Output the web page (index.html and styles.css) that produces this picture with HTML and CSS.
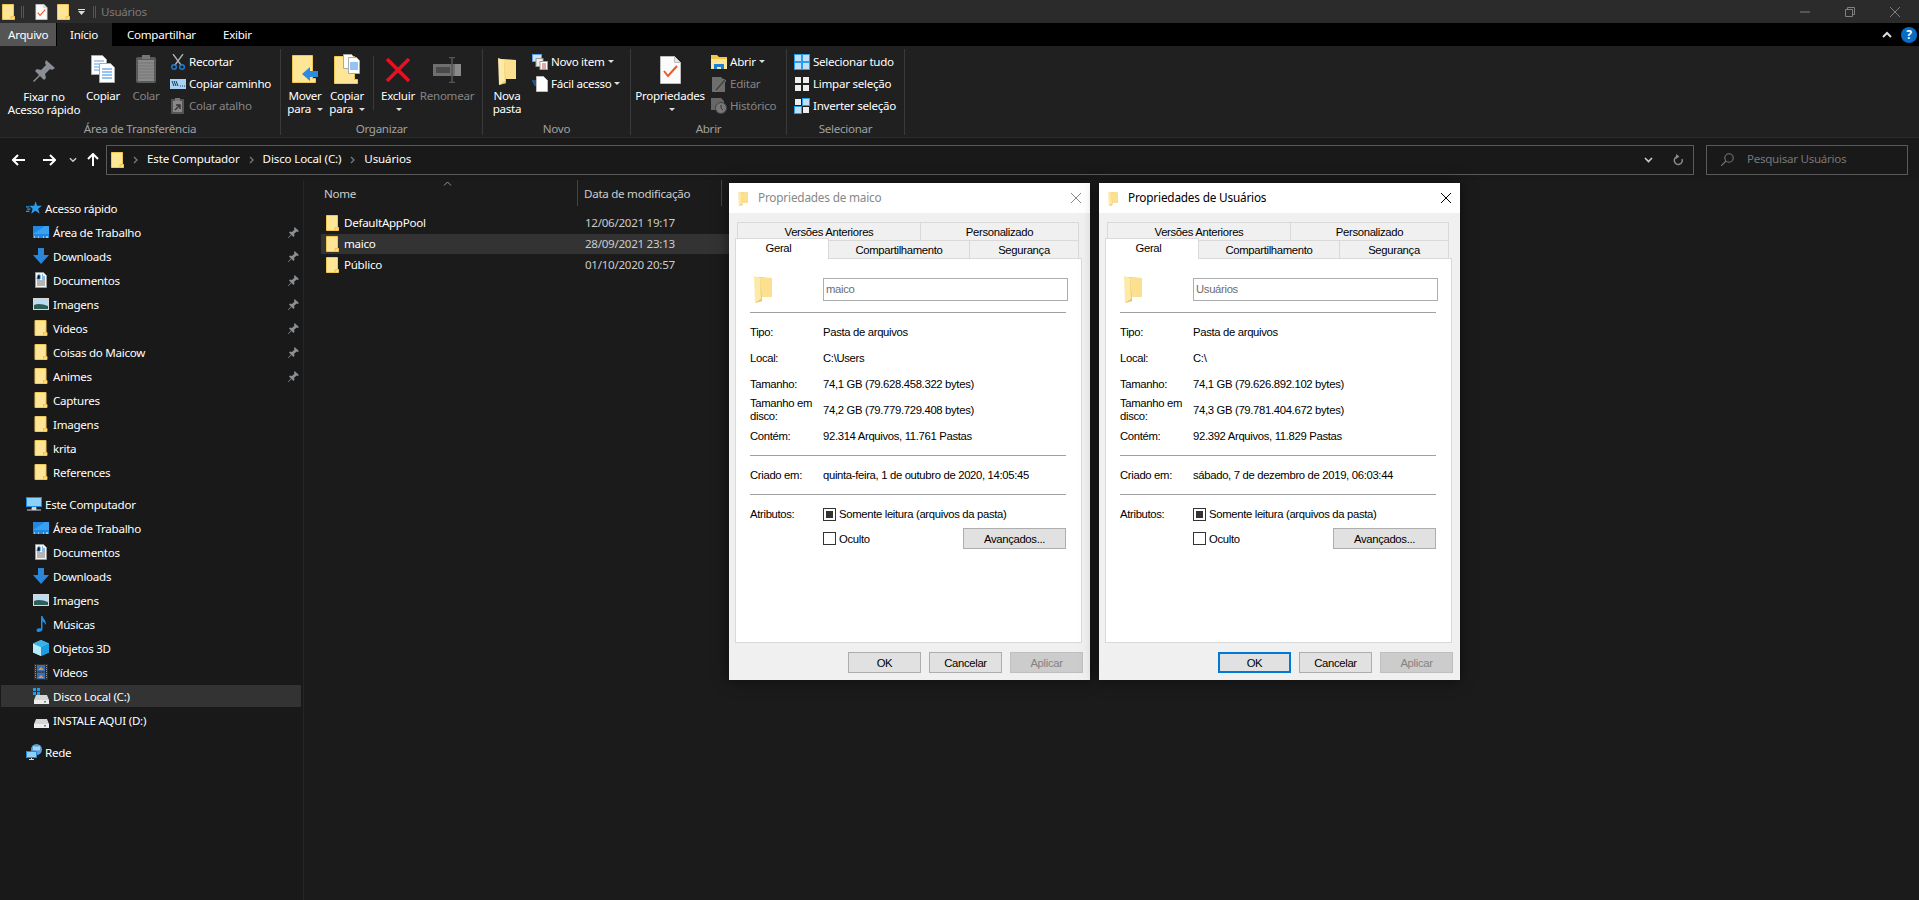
FILE: index.html
```html
<!DOCTYPE html>
<html lang="pt-BR">
<head>
    <meta charset="UTF-8">
    <title>Usuários</title>
    <link rel="stylesheet" href="styles.css">
</head>
<body>
    <!-- Icon sheet -->
    <svg class="sprites" xmlns="http://www.w3.org/2000/svg">
        <symbol id="i-folder" viewBox="0 0 13 16"><path d="M.5.5h11v12h1v3H.5z" fill="#ffe596" stroke="#f2c652"/><path d="M9 15.5v-3h3.5" fill="#f9d56e" stroke="#f2c652"/></symbol>
        <symbol id="i-book" viewBox="0 0 18 28"><path d="M1 2h5l12 1v19H6z" fill="#f3d27a"/><path d="M6 3h12v19H8z" fill="#fbe08f"/><path d="M0 1l6 2 2 23-7 2z" fill="#fde9a8"/><path d="M6 3l2 23-7 2 6-4z" fill="#eebf58"/></symbol>
        <symbol id="i-props" viewBox="0 0 21 28"><path d="M.5.5h14l6 6v21H.5z" fill="#fbfbfb" stroke="#bdbdbd"/><path d="M14.500.5v6h6" fill="#e4e4e4" stroke="#bdbdbd"/><path d="M4 15l4 5 9-10" fill="none" stroke="#ea5a24" stroke-width="2"/></symbol>
        <symbol id="i-pin" viewBox="0 0 22 22"><path d="M13 0l9 8-3 2-2-1-5 5 1 4-2 2-4-4-6 6-1-1 6-6-4-4 2-2 4 1 5-5-1-2z" fill="#8a8f96"/></symbol>
        <symbol id="i-copy" viewBox="0 0 24 28"><path d="M.5.5h11l4 4v15H.5z" fill="#fff" stroke="#aaa"/><path d="M3 6h10M3 9h10M3 12h10M3 15h10" stroke="#5aa0e8"/><path d="M8.500 8.500h11l4 4v15h-15z" fill="#fff" stroke="#aaa"/><path d="M11 14h10M11 17h10M11 20h10M11 23h10" stroke="#2f86e0"/></symbol>
        <symbol id="i-paste" viewBox="0 0 20 28"><rect y="2" width="20" height="26" rx="2" fill="#5a5a5a"/><rect x="2" y="5" width="16" height="21" fill="#8a8a8a"/><path d="M2 8h16M2 11h16M2 14h16M2 17h16M2 20h16M2 23h16" stroke="#777"/><rect x="6" width="8" height="4" fill="#777"/></symbol>
        <symbol id="i-scissors" viewBox="0 0 14 16"><path d="M2 0l8 11M12 0L4 11" stroke="#b5b5b5" stroke-width="1.300" fill="none"/><circle cx="3" cy="13" r="2.300" fill="none" stroke="#1f7fd6" stroke-width="1.400"/><circle cx="11" cy="13" r="2.300" fill="none" stroke="#1f7fd6" stroke-width="1.400"/></symbol>
        <symbol id="i-path" viewBox="0 0 16 10"><rect width="16" height="10" fill="#a9d3f5"/><path d="M2 2l2 5M4 2l2 5M6 2l2 5M10 7h1M12 7h1M14 7h1" stroke="#1b3a57"/></symbol>
        <symbol id="i-pastelink" viewBox="0 0 14 16"><rect y="1" width="13" height="15" rx="1" fill="#555"/><rect x="2" y="3" width="9" height="11" fill="#888"/><rect x="4" width="5" height="3" fill="#777"/><path d="M4 12l4-4M5 7h4v4" stroke="#333" stroke-width="1.400" fill="none"/></symbol>
        <symbol id="i-move" viewBox="0 0 26 28"><path d="M.5.500h20v23h3v4H.5z" fill="#ffe596" stroke="#f2c652"/><path d="M10 19l8-7v4h8v6h-8v4z" fill="#2a8be0"/></symbol>
        <symbol id="i-copyto" viewBox="0 0 26 30"><path d="M.5 2.500h20v23h3v4H.5z" fill="#ffe596" stroke="#f2c652"/><path d="M9.500.5h8l2 2v12h-10z" fill="#fff" stroke="#aaa"/><path d="M14.500 3.500h8l3 3v13h-11z" fill="#fff" stroke="#aaa"/><path d="M16 9h8M16 11h8M16 13h8M16 15h8" stroke="#2f86e0"/></symbol>
        <symbol id="i-delete" viewBox="0 0 24 24"><path d="M1 1l22 22M23 1L1 23" stroke="#e81123" stroke-width="3.600"/></symbol>
        <symbol id="i-rename" viewBox="0 0 28 26"><rect y="7" width="28" height="12" fill="#6f6f6f"/><rect x="3" y="10" width="14" height="6" fill="#4a4a4a"/><rect x="22" y="7" width="6" height="12" fill="#8a8a8a"/><path d="M16 .5h6M19 .5v25M16 25.500h6" stroke="#555" stroke-width="1.500" fill="none"/></symbol>
        <symbol id="i-newitem" viewBox="0 0 16 16"><rect x=".5" y=".5" width="9" height="7" fill="#cfe4f7" stroke="#5aa0e8"/><rect x="4" y="4.500" width="7" height="8" fill="#eee" stroke="#999"/><rect x="8" y="7.500" width="7.500" height="8" fill="#fff" stroke="#999"/><path d="M10 10h4M10 12h4M10 14h4" stroke="#c0504d"/></symbol>
        <symbol id="i-easy" viewBox="0 0 16 16"><path d="M4.500.5h7l4 4v11h-11z" fill="#fff" stroke="#bbb"/><path d="M0 5h4M1 7h3M2 9h2" stroke="#2f86e0"/></symbol>
        <symbol id="i-open" viewBox="0 0 16 14"><path d="M0 0h6l2 2h8v12H0z" fill="#f6c544"/><path d="M0 4h16v10H0z" fill="#ffe596"/><path d="M3 14V9h10v5h-3v-2H6v2z" fill="#1f7fd6"/></symbol>
        <symbol id="i-edit" viewBox="0 0 16 16"><path d="M1 1h9l4 4v11H1z" fill="#6d6d6d"/><path d="M4 13l9-10 2 2-9 10H4z" fill="#4a4a4a" stroke="#8a8a8a" stroke-width=".6"/></symbol>
        <symbol id="i-history" viewBox="0 0 16 16"><path d="M0 0h10l3 3v9H0z" fill="#666"/><circle cx="10" cy="10" r="5.500" fill="#777" stroke="#444"/><path d="M10 7v3l2 2" stroke="#333" fill="none"/></symbol>
        <symbol id="i-selall" viewBox="0 0 16 16"><rect width="16" height="16" fill="#2f9be8"/><path d="M1 1h6v6H1zM9 1h6v6H9zM1 9h6v6H1zM9 9h6v6H9z" fill="#bfe0f8"/></symbol>
        <symbol id="i-selnone" viewBox="0 0 16 16"><path d="M1 1h6v6H1zM9 1h6v6H9zM1 9h6v6H1zM9 9h6v6H9z" fill="#eee"/></symbol>
        <symbol id="i-selinv" viewBox="0 0 16 16"><path d="M8 0h8v8H8zM0 8h8v8H0z" fill="#2f9be8"/><path d="M9 1h6v6H9zM1 9h6v6H1z" fill="#bfe0f8"/><path d="M1 1h6v6H1zM9 9h6v6H9z" fill="#eee"/></symbol>
        <symbol id="i-star" viewBox="0 0 14 12"><path d="M8.500 0l1.200 4H14l-3.400 2.600L12 11 8.300 8.500 4.500 11l1.300-4.300-3-2.700h4.300z" fill="#2f9be8"/><path d="M0 5h3M1 7h3M0 9h3" stroke="#2f9be8"/></symbol>
        <symbol id="i-desktop" viewBox="0 0 16 12"><rect width="16" height="12" fill="#1e88e5"/><path d="M0 8L12 0h4v8z" fill="#3aa0f0"/><path d="M1 11h1M5 11h1M10 11h1M13 11h2" stroke="#fff"/></symbol>
        <symbol id="i-down" viewBox="0 0 16 16"><path d="M5 0h6v7h5l-8 9-8-9h5z" fill="#2a86da"/></symbol>
        <symbol id="i-doc" viewBox="0 0 12 16"><path d="M.5.5h8l3 3v12H.5z" fill="#f4f4f4" stroke="#999"/><path d="M2 7h3V3H3zM7 3h1M7 5h3M7 7h3" stroke="#1f7fd6"/><path d="M2 9h8M2 11h8M2 13h8" stroke="#777"/></symbol>
        <symbol id="i-picture" viewBox="0 0 16 12"><rect width="16" height="12" fill="#d9d9d9"/><rect x="1" y="1" width="14" height="10" fill="#bcdcf4"/><path d="M1 7c4-2 9-1 14 1v3H1z" fill="#2e5f57"/></symbol>
        <symbol id="i-pc" viewBox="0 0 16 15"><rect y=".5" width="16" height="10" fill="#1e88e5"/><rect x="1" y="1.500" width="14" height="8" fill="#8ed0f8"/><path d="M6 11h4v2H6zM1 13.500h14" stroke="#cfd8dc" fill="#cfd8dc"/></symbol>
        <symbol id="i-music" viewBox="0 0 12 16"><path d="M6 0h1.500c.4 3 4 4 3.500 9-1-2-2-3-3.500-3.500V13c0 2-2 3-4 3S1 14 2 13s3-1 4-.5z" fill="#1f8fe6"/></symbol>
        <symbol id="i-cube" viewBox="0 0 16 16"><path d="M8 0l8 3.500v9L8 16 0 12.500v-9z" fill="#4ab8ec"/><path d="M0 3.500L8 7v9l-8-3.500z" fill="#b8ecf8"/><path d="M16 3.500L8 7v9l8-3.500z" fill="#1b9ee0"/><path d="M8 0l8 3.500L8 7 0 3.500z" fill="#3db0e8"/></symbol>
        <symbol id="i-film" viewBox="0 0 14 16"><rect width="14" height="16" fill="#2e2e2e"/><rect x="3" y="1" width="8" height="6.500" fill="#3b6fb5"/><rect x="3" y="8.500" width="8" height="6.500" fill="#3b6fb5"/><path d="M4 6l3-3 3 3zM4 14l3-3 3 3z" fill="#e8903a"/><path d="M1.500 1v14M12.500 1v14" stroke="#999" stroke-dasharray="1 1"/></symbol>
        <symbol id="i-drive" viewBox="0 0 15 9"><path d="M2 0h11l2 5v4H0V5z" fill="#d6d6d6"/><rect y="5" width="15" height="4" fill="#eee"/><rect x="10" y="6" width="2" height="1.500" fill="#3fa34d"/></symbol>
        <symbol id="i-win" viewBox="0 0 7 7"><path d="M0 0h3v3H0zM4 0h3v3H4zM0 4h3v3H0zM4 4h3v3H4z" fill="#1f9be8"/></symbol>
        <symbol id="i-net" viewBox="0 0 16 16"><circle cx="10.500" cy="5.500" r="5.500" fill="#5b9fd8"/><path d="M7 2c2 1 5 1 7 0v4c-2 1-5 0-7 0z" fill="#a8d4ef"/><rect y="7" width="11" height="7" fill="#1e88e5"/><rect x="1" y="8" width="9" height="5" fill="#8ed0f8"/><path d="M3 15.500h5M5.500 14v1" stroke="#cfd8dc"/></symbol>
        <symbol id="i-search" viewBox="0 0 13 13"><circle cx="8" cy="5" r="4.200" fill="none" stroke="#777" stroke-width="1.100"/><path d="M5 8l-5 5" stroke="#777" stroke-width="1.100"/></symbol>
        <symbol id="i-back" viewBox="0 0 13 12"><path d="M6 1L1 6l5 5M1 6h12" fill="none" stroke="#fff" stroke-width="2"/></symbol>
        <symbol id="i-up" viewBox="0 0 12 13"><path d="M1 6l5-5 5 5M6 1v12" fill="none" stroke="#fff" stroke-width="2"/></symbol>
        <symbol id="i-chev-down" viewBox="0 0 9 6"><path d="M1 1l3.500 3.500L8 1" fill="none" stroke="#ccc" stroke-width="1.600"/></symbol>
        <symbol id="i-chev-right" viewBox="0 0 5 8"><path d="M1 1l3 3-3 3" fill="none" stroke="#777" stroke-width="1.400"/></symbol>
        <symbol id="i-refresh" viewBox="0 0 11 12"><path d="M5 2.500A4 4 0 1 0 9 5" fill="none" stroke="#8a8a8a" stroke-width="1.500"/><path d="M3 0l3.500 2.500L3 5z" fill="#8a8a8a"/></symbol>
    </svg>

    <div class="explorer">
        <!-- Title bar -->
        <header class="titlebar">
            <svg class="qa qa-first"><use href="#i-folder"/></svg>
            <span class="qa-sep"></span>
            <svg class="qa qa-props"><use href="#i-props"/></svg>
            <svg class="qa qa-folder"><use href="#i-folder"/></svg>
            <svg class="qa-more" viewBox="0 0 7 6"><path d="M0 .5h7" stroke="#ddd"/><path d="M0 2h7L3.500 6z" fill="#ddd"/></svg>
            <span class="qa-sep qa-sep-last"></span>
            <span class="title-text">Usuários</span>
            <div class="win-controls">
                <svg class="win-btn" viewBox="0 0 10 10"><path d="M0 5h10"/></svg>
                <svg class="win-btn" viewBox="0 0 10 10"><path d="M.5 2.500h7v7h-7zM2.500 2.500v-2h7v7h-2"/></svg>
                <svg class="win-btn" viewBox="0 0 10 10"><path d="M0 0l10 10M10 0L0 10"/></svg>
            </div>
        </header>

        <!-- Ribbon tabs -->
        <nav class="tabstrip">
            <span class="rtab rtab-file">Arquivo</span>
            <span class="rtab rtab-active">Início</span>
            <span class="rtab rtab-share">Compartilhar</span>
            <span class="rtab rtab-view">Exibir</span>
            <div class="tabstrip-right">
                <svg class="collapse" viewBox="0 0 10 7"><path d="M1 6l4-4 4 4" fill="none" stroke="#ddd" stroke-width="2"/></svg>
                <span class="help">?</span>
            </div>
        </nav>

        <!-- Ribbon -->
        <section class="ribbon">
            <div class="group group-clip">
                <div class="group-items">
                    <div class="big w-pin"><svg class="ic-pin"><use href="#i-pin"/></svg><span>Fixar no<br>Acesso rápido</span></div>
                    <div class="big w-copy"><svg class="ic-copy"><use href="#i-copy"/></svg><span>Copiar</span></div>
                    <div class="big w-paste dim"><svg class="ic-paste"><use href="#i-paste"/></svg><span>Colar</span></div>
                    <div class="stack">
                        <div class="small"><svg><use href="#i-scissors"/></svg>Recortar</div>
                        <div class="small"><svg><use href="#i-path"/></svg>Copiar caminho</div>
                        <div class="small dim"><svg><use href="#i-pastelink"/></svg>Colar atalho</div>
                    </div>
                </div>
                <div class="group-label">Área de Transferência</div>
            </div>
            <div class="group group-org">
                <div class="group-items">
                    <div class="big w-move"><svg class="ic-move"><use href="#i-move"/></svg><span>Mover<br>para <i class="caret"></i></span></div>
                    <div class="big w-copyto"><svg class="ic-move"><use href="#i-copyto"/></svg><span>Copiar<br>para <i class="caret"></i></span></div>
                    <span class="inner-sep"></span>
                    <div class="big w-del"><svg class="ic-del"><use href="#i-delete"/></svg><span>Excluir<br><i class="caret"></i></span></div>
                    <div class="big w-ren dim"><svg class="ic-ren"><use href="#i-rename"/></svg><span>Renomear</span></div>
                </div>
                <div class="group-label">Organizar</div>
            </div>
            <div class="group group-new">
                <div class="group-items">
                    <div class="big w-new"><svg class="ic-book"><use href="#i-book"/></svg><span>Nova<br>pasta</span></div>
                    <div class="stack stack-new">
                        <div class="small"><svg><use href="#i-newitem"/></svg>Novo item <i class="caret"></i></div>
                        <div class="small"><svg><use href="#i-easy"/></svg>Fácil acesso <i class="caret"></i></div>
                    </div>
                </div>
                <div class="group-label">Novo</div>
            </div>
            <div class="group group-open">
                <div class="group-items">
                    <div class="big w-props"><svg class="ic-props"><use href="#i-props"/></svg><span>Propriedades<br><i class="caret"></i></span></div>
                    <div class="stack stack-open">
                        <div class="small"><svg><use href="#i-open"/></svg>Abrir <i class="caret"></i></div>
                        <div class="small dim"><svg><use href="#i-edit"/></svg>Editar</div>
                        <div class="small dim"><svg><use href="#i-history"/></svg>Histórico</div>
                    </div>
                </div>
                <div class="group-label">Abrir</div>
            </div>
            <div class="group group-sel">
                <div class="group-items">
                    <div class="stack stack-sel">
                        <div class="small"><svg><use href="#i-selall"/></svg>Selecionar tudo</div>
                        <div class="small"><svg><use href="#i-selnone"/></svg>Limpar seleção</div>
                        <div class="small"><svg><use href="#i-selinv"/></svg>Inverter seleção</div>
                    </div>
                </div>
                <div class="group-label">Selecionar</div>
            </div>
        </section>

        <!-- Address bar -->
        <section class="addressbar">
            <svg class="nav-back"><use href="#i-back"/></svg>
            <svg class="nav-fwd"><use href="#i-back"/></svg>
            <svg class="nav-hist"><use href="#i-chev-down"/></svg>
            <svg class="nav-up"><use href="#i-up"/></svg>
            <div class="address">
                <svg class="addr-folder"><use href="#i-folder"/></svg>
                <svg class="crumb-sep"><use href="#i-chev-right"/></svg>
                <span class="crumb">Este Computador</span>
                <svg class="crumb-sep"><use href="#i-chev-right"/></svg>
                <span class="crumb">Disco Local (C:)</span>
                <svg class="crumb-sep"><use href="#i-chev-right"/></svg>
                <span class="crumb">Usuários</span>
                <div class="addr-tools">
                    <svg class="addr-chev"><use href="#i-chev-down"/></svg>
                    <svg class="addr-refresh"><use href="#i-refresh"/></svg>
                </div>
            </div>
            <div class="searchbox">
                <svg class="search-ic"><use href="#i-search"/></svg>
                <span class="search-text">Pesquisar Usuários</span>
            </div>
        </section>

        <!-- Main -->
        <main class="main">
            <aside class="sidebar">
                <div class="tree-row root"><svg><use href="#i-star"/></svg>Acesso rápido</div>
                <div class="tree-row"><svg><use href="#i-desktop"/></svg>Área de Trabalho<svg class="pin"><use href="#i-pin"/></svg></div>
                <div class="tree-row"><svg><use href="#i-down"/></svg>Downloads<svg class="pin"><use href="#i-pin"/></svg></div>
                <div class="tree-row"><svg><use href="#i-doc"/></svg>Documentos<svg class="pin"><use href="#i-pin"/></svg></div>
                <div class="tree-row"><svg><use href="#i-picture"/></svg>Imagens<svg class="pin"><use href="#i-pin"/></svg></div>
                <div class="tree-row"><svg><use href="#i-folder"/></svg>Videos<svg class="pin"><use href="#i-pin"/></svg></div>
                <div class="tree-row"><svg><use href="#i-folder"/></svg>Coisas do Maicow<svg class="pin"><use href="#i-pin"/></svg></div>
                <div class="tree-row"><svg><use href="#i-folder"/></svg>Animes<svg class="pin"><use href="#i-pin"/></svg></div>
                <div class="tree-row"><svg><use href="#i-folder"/></svg>Captures</div>
                <div class="tree-row"><svg><use href="#i-folder"/></svg>Imagens</div>
                <div class="tree-row"><svg><use href="#i-folder"/></svg>krita</div>
                <div class="tree-row"><svg><use href="#i-folder"/></svg>References</div>

                <div class="tree-row root tree-gap"><svg><use href="#i-pc"/></svg>Este Computador</div>
                <div class="tree-row"><svg><use href="#i-desktop"/></svg>Área de Trabalho</div>
                <div class="tree-row"><svg><use href="#i-doc"/></svg>Documentos</div>
                <div class="tree-row"><svg><use href="#i-down"/></svg>Downloads</div>
                <div class="tree-row"><svg><use href="#i-picture"/></svg>Imagens</div>
                <div class="tree-row"><svg><use href="#i-music"/></svg>Músicas</div>
                <div class="tree-row"><svg><use href="#i-cube"/></svg>Objetos 3D</div>
                <div class="tree-row"><svg><use href="#i-film"/></svg>Vídeos</div>
                <div class="tree-row selected"><span class="drive-c"><svg class="drive-win"><use href="#i-win"/></svg><svg class="drive-disk"><use href="#i-drive"/></svg></span>Disco Local (C:)</div>
                <div class="tree-row"><span class="drive-c"><svg class="drive-disk"><use href="#i-drive"/></svg></span>INSTALE AQUI (D:)</div>

                <div class="tree-row root tree-gap"><svg><use href="#i-net"/></svg>Rede</div>
            </aside>

            <section class="files">
                <div class="file-head">
                    <div class="col-name">Nome<svg class="sort" viewBox="0 0 9 5"><path d="M1 4.500L4.500 1 8 4.500" fill="none" stroke="#999"/></svg></div>
                    <div class="col-date">Data de modificação</div>
                </div>
                <div class="file-row"><div class="col-name"><svg><use href="#i-folder"/></svg><span>DefaultAppPool</span></div><div class="col-date">12/06/2021 19:17</div></div>
                <div class="file-row active"><div class="col-name"><svg><use href="#i-folder"/></svg><span>maico</span></div><div class="col-date">28/09/2021 23:13</div></div>
                <div class="file-row"><div class="col-name"><svg><use href="#i-folder"/></svg><span>Público</span></div><div class="col-date">01/10/2020 20:57</div></div>
            </section>
        </main>
    </div>

    <!-- Properties of maico -->
    <div class="dialog dialog-back">
        <div class="dlg-title">
            <svg class="dlg-ic"><use href="#i-book"/></svg>
            <span class="dlg-text">Propriedades de maico</span>
            <svg class="dlg-close" viewBox="0 0 10 10"><path d="M0 0l10 10M10 0L0 10"/></svg>
        </div>
        <div class="dlg-body">
            <div class="tabs-top"><span class="t-prev">Versões Anteriores</span><span class="t-custom">Personalizado</span></div>
            <div class="tabs-low"><span class="t-general">Geral</span><span class="t-share">Compartilhamento</span><span class="t-sec">Segurança</span></div>
            <div class="panel">
                <div class="name-row"><svg class="panel-ic"><use href="#i-book"/></svg><div class="name-input">maico</div></div>
                <hr>
                <div class="prop"><span>Tipo:</span><span>Pasta de arquivos</span></div>
                <div class="prop"><span>Local:</span><span>C:\Users</span></div>
                <div class="prop"><span>Tamanho:</span><span>74,1 GB (79.628.458.322 bytes)</span></div>
                <div class="prop"><span class="two-line">Tamanho em disco:</span><span>74,2 GB (79.779.729.408 bytes)</span></div>
                <div class="prop"><span>Contém:</span><span>92.314 Arquivos, 11.761 Pastas</span></div>
                <hr>
                <div class="prop"><span>Criado em:</span><span>quinta-feira, 1 de outubro de 2020, 14:05:45</span></div>
                <hr>
                <div class="attrs">
                    <span class="attrs-label">Atributos:</span>
                    <div class="attrs-main">
                        <div class="check-row"><i class="check mixed"></i>Somente leitura (arquivos da pasta)</div>
                        <div class="check-row"><i class="check"></i>Oculto<span class="btn btn-adv">Avançados...</span></div>
                    </div>
                </div>
            </div>
            <div class="dlg-buttons">
                <span class="btn">OK</span><span class="btn">Cancelar</span><span class="btn btn-off">Aplicar</span>
            </div>
        </div>
    </div>

    <!-- Properties of Usuários -->
    <div class="dialog dialog-front">
        <div class="dlg-title">
            <svg class="dlg-ic"><use href="#i-book"/></svg>
            <span class="dlg-text">Propriedades de Usuários</span>
            <svg class="dlg-close" viewBox="0 0 10 10"><path d="M0 0l10 10M10 0L0 10"/></svg>
        </div>
        <div class="dlg-body">
            <div class="tabs-top"><span class="t-prev">Versões Anteriores</span><span class="t-custom">Personalizado</span></div>
            <div class="tabs-low"><span class="t-general">Geral</span><span class="t-share">Compartilhamento</span><span class="t-sec">Segurança</span></div>
            <div class="panel">
                <div class="name-row"><svg class="panel-ic"><use href="#i-book"/></svg><div class="name-input">Usuários</div></div>
                <hr>
                <div class="prop"><span>Tipo:</span><span>Pasta de arquivos</span></div>
                <div class="prop"><span>Local:</span><span>C:\</span></div>
                <div class="prop"><span>Tamanho:</span><span>74,1 GB (79.626.892.102 bytes)</span></div>
                <div class="prop"><span class="two-line">Tamanho em disco:</span><span>74,3 GB (79.781.404.672 bytes)</span></div>
                <div class="prop"><span>Contém:</span><span>92.392 Arquivos, 11.829 Pastas</span></div>
                <hr>
                <div class="prop"><span>Criado em:</span><span>sábado, 7 de dezembro de 2019, 06:03:44</span></div>
                <hr>
                <div class="attrs">
                    <span class="attrs-label">Atributos:</span>
                    <div class="attrs-main">
                        <div class="check-row"><i class="check mixed"></i>Somente leitura (arquivos da pasta)</div>
                        <div class="check-row"><i class="check"></i>Oculto<span class="btn btn-adv">Avançados...</span></div>
                    </div>
                </div>
            </div>
            <div class="dlg-buttons">
                <span class="btn btn-focus">OK</span><span class="btn">Cancelar</span><span class="btn btn-off">Aplicar</span>
            </div>
        </div>
    </div>
</body>
</html>
```

FILE: styles.css
```css
* {
    box-sizing: border-box;
}

html, body {
    margin: 0;
    height: 100%;
    overflow: hidden;
}

body {
    position: relative;
    background: #191919;
    color: #fff;
    font-family: "Noto Sans", sans-serif;
    font-size: 11.6px;
    letter-spacing: -0.28px;
}

.sprites {
    display: none;
}

.explorer {
    display: flex;
    flex-direction: column;
    height: 900px;
}

.dim {
    color: #858585;
}

/* Title bar */
.titlebar {
    display: flex;
    align-items: center;
    height: 23px;
    background: #2b2b2b;
    color: #7b7b7b;
}

.qa {
    width: 13px;
    height: 16px;
    flex: none;
}

.qa-first {
    margin-left: 2px;
}

.qa-sep {
    width: 3px;
    height: 12px;
    margin: 0 11px 0 6px;
    border-left: 1px solid #555;
    border-right: 1px solid #555;
}

.qa-folder {
    margin-left: 9px;
}

.qa-more {
    width: 7px;
    height: 6px;
    margin-left: 8px;
}

.qa-sep-last {
    margin: 0 5px 0 8px;
}

.win-controls {
    display: flex;
    gap: 35px;
    margin-left: auto;
    margin-right: 19px;
}

.win-btn {
    width: 10px;
    height: 10px;
    fill: none;
    stroke: #808080;
    stroke-width: 1;
}

/* Ribbon tabs */
.tabstrip {
    display: flex;
    align-items: stretch;
    height: 23px;
    background: #000;
}

.rtab {
    display: flex;
    align-items: center;
}

.rtab-file {
    width: 56px;
    margin-right: 1px;
    padding-left: 8px;
    background: #555;
}

.rtab-active {
    width: 55px;
    padding-left: 13px;
    background: #202020;
}

.rtab-share {
    margin-left: 15px;
    width: 96px;
}

.tabstrip-right {
    display: flex;
    align-items: center;
    gap: 9px;
    margin-left: auto;
    margin-right: 2px;
}

.collapse {
    width: 10px;
    height: 7px;
}

.help {
    width: 16px;
    height: 16px;
    border-radius: 50%;
    background: #0a6cc4;
    font-weight: 700;
    font-size: 12px;
    line-height: 16px;
    text-align: center;
    letter-spacing: 0;
}

/* Ribbon */
.ribbon {
    display: flex;
    height: 92px;
    background: #202020;
    border-bottom: 1px solid #2b2b2b;
}

.group {
    display: flex;
    flex-direction: column;
    flex: none;
    border-right: 1px solid #3a3a3a;
    margin-top: 3px;
    margin-bottom: 2px;
}

.group-clip { width: 281px; }
.group-org { width: 202px; }
.group-new { width: 148px; }
.group-open { width: 156px; }
.group-sel { width: 118px; }

.group-items {
    display: flex;
    flex: 1;
    padding-top: 2px;
}

.group-label {
    height: 14px;
    line-height: 16px;
    text-align: center;
    color: #a0a0a0;
}

.big {
    display: flex;
    flex-direction: column;
    align-items: center;
    flex: none;
    line-height: 13px;
    text-align: center;
}

.big svg {
    flex: none;
}

.big > span {
    margin-top: -1px;
    white-space: nowrap;
}

.w-pin { width: 80px; margin-left: 4px; }
.w-copy { width: 38px; }
.w-paste { width: 48px; }
.w-move { width: 44px; margin-left: 2px; }
.w-copyto { width: 40px; }
.w-del { width: 44px; }
.w-ren { width: 54px; }
.w-new { width: 40px; margin-left: 4px; }
.w-props { width: 70px; margin-left: 4px; }

.ic-pin { width: 22px; height: 22px; margin-top: 9px; margin-bottom: 9px; }
.ic-copy { width: 24px; height: 28px; margin-top: 4px; margin-bottom: 7px; }
.ic-paste { width: 20px; height: 28px; margin-top: 4px; margin-bottom: 7px; }
.ic-move { width: 26px; height: 30px; margin-top: 3px; margin-bottom: 6px; }
.ic-del { width: 24px; height: 24px; margin-top: 7px; margin-bottom: 8px; }
.ic-ren { width: 28px; height: 26px; margin-top: 6px; margin-bottom: 7px; }
.ic-book { width: 18px; height: 28px; margin-top: 6px; margin-bottom: 5px; }
.ic-props { width: 21px; height: 28px; margin-top: 5px; margin-bottom: 6px; }

.inner-sep {
    flex: none;
    width: 1px;
    height: 54px;
    margin: 5px 2px 0 6px;
    background: #3a3a3a;
}

.stack {
    display: flex;
    flex-direction: column;
}

.stack-new { margin-left: 5px; }
.stack-open { margin-left: 6px; }
.stack-sel { margin-left: 7px; }

.small {
    display: flex;
    align-items: center;
    height: 22px;
    padding-bottom: 2px;
    white-space: nowrap;
}

.small svg {
    width: 16px;
    height: 16px;
    margin-top: 2px;
    margin-right: 3px;
    flex: none;
}

.caret {
    display: inline-block;
    width: 0;
    height: 0;
    margin-left: 3px;
    vertical-align: middle;
    border-left: 3px solid transparent;
    border-right: 3px solid transparent;
    border-top: 3px solid #ddd;
}

/* Address bar */
.addressbar {
    display: flex;
    align-items: center;
    height: 42px;
    padding-top: 1px;
    background: #191919;
}

.nav-back { width: 13px; height: 12px; margin-left: 12px; }
.nav-fwd { width: 13px; height: 12px; margin-left: 18px; transform: scaleX(-1); }
.nav-hist { width: 8px; height: 6px; margin-left: 13px; }
.nav-up { width: 12px; height: 13px; margin-left: 10px; }

.address {
    display: flex;
    align-items: center;
    width: 1588px;
    height: 30px;
    margin-left: 7px;
    border: 1px solid #5a5a5a;
}

.addr-folder {
    width: 13px;
    height: 16px;
    margin-left: 4px;
}

.crumb-sep {
    width: 5px;
    height: 8px;
    margin: 0 9px;
}

.crumb {
    padding-bottom: 2px;
    letter-spacing: -0.15px;
}

.addr-tools {
    display: flex;
    align-items: center;
    height: 100%;
    margin-left: auto;
}

.addr-chev {
    width: 9px;
    height: 6px;
    margin-right: 10px;
}

.addr-refresh {
    width: 11px;
    height: 12px;
    margin: 0 9px 0 10px;
}

.searchbox {
    display: flex;
    align-items: center;
    width: 202px;
    height: 30px;
    margin-left: 12px;
    border: 1px solid #5a5a5a;
    color: #777;
}

.search-ic {
    width: 13px;
    height: 13px;
    margin: 0 13px 0 14px;
}

.search-text {
    padding-bottom: 2px;
}

/* Main area */
.main {
    display: flex;
    flex: 1;
    min-height: 0;
}

.sidebar {
    width: 304px;
    flex: none;
    padding-top: 16px;
    border-right: 1px solid #262626;
}

.tree-row {
    display: flex;
    align-items: center;
    height: 24px;
    padding-left: 33px;
    border-top: 1px solid transparent;
    border-bottom: 1px solid transparent;
    background-clip: padding-box;
}

.tree-row > svg:first-child {
    width: 16px;
    height: 16px;
    margin-right: 4px;
    flex: none;
}

.tree-row.root {
    padding-left: 26px;
}

.tree-row.root > svg:first-child {
    margin-right: 3px;
}

.tree-gap {
    margin-top: 8px;
}

.tree-row.selected {
    margin-left: 1px;
    margin-right: 2px;
    padding-left: 32px;
    background-color: #333;
}

.pin {
    width: 11px;
    height: 11px;
    margin-left: auto;
    margin-right: 4px;
}

.drive-c {
    position: relative;
    display: block;
    width: 16px;
    height: 16px;
    margin-right: 4px;
    flex: none;
}

.drive-win {
    position: absolute;
    left: 0;
    top: 0;
    width: 7px;
    height: 7px;
}

.drive-disk {
    position: absolute;
    left: 1px;
    top: 7px;
    width: 15px;
    height: 9px;
}

.files {
    flex: 1;
    padding-left: 17px;
    background: #1b1b1b;
}

.file-head {
    display: flex;
    align-items: center;
    height: 26px;
    margin-bottom: 7px;
    color: #ccc;
}

.file-head .col-name {
    position: relative;
    padding-left: 3px;
    height: 100%;
    display: flex;
    align-items: center;
    border-right: 1px solid #444;
}

.file-head .col-date {
    height: 100%;
    display: flex;
    align-items: center;
    padding-left: 6px;
    width: 144px;
    border-right: 1px solid #444;
}

.sort {
    position: absolute;
    left: 122px;
    top: 1px;
    width: 9px;
    height: 5px;
}

.col-name {
    width: 257px;
    flex: none;
}

.col-date {
    padding-left: 7px;
    color: #ccc;
}

.file-row {
    display: flex;
    align-items: center;
    width: 420px;
    height: 20px;
    margin-bottom: 1px;
}

.file-row .col-name {
    display: flex;
    align-items: center;
    padding-left: 5px;
}

.file-row .col-name span,
.file-row .col-date {
    padding-bottom: 2px;
}

.file-row svg {
    width: 13px;
    height: 16px;
    margin-right: 5px;
}

.file-row.active {
    background: #333;
}

/* Property dialogs */
.dialog {
    position: absolute;
    top: 183px;
    width: 361px;
    height: 497px;
    display: flex;
    flex-direction: column;
    background: #f0f0f0;
    color: #000;
    font-family: "Liberation Sans", Arial, sans-serif;
    font-size: 11.3px;
    letter-spacing: -0.33px;
    box-shadow: 0 0 14px rgba(0, 0, 0, 0.55);
}

.dialog-back {
    left: 729px;
}

.dialog-front {
    left: 1099px;
}

.dlg-title {
    display: flex;
    align-items: center;
    height: 30px;
    padding: 0 9px;
    background: #fff;
    font-family: "Noto Sans", sans-serif;
    font-size: 11.8px;
    letter-spacing: -0.2px;
    flex: none;
}

.dlg-text {
    padding-bottom: 2px;
}

.dialog-back .dlg-title {
    color: #888;
}

.dlg-ic {
    width: 10px;
    height: 15px;
    margin-right: 10px;
}

.dlg-close {
    width: 10px;
    height: 10px;
    margin-left: auto;
    fill: none;
    stroke: #000;
}

.dialog-back .dlg-close {
    stroke: #888;
}

.dlg-body {
    flex: 1;
    padding: 9px 8px 0 6px;
}

.tabs-top,
.tabs-low {
    display: flex;
    height: 18px;
}

.tabs-top {
    margin-left: 2px;
}

.tabs-top span,
.tabs-low span {
    display: flex;
    align-items: center;
    justify-content: center;
    border: 1px solid #d9d9d9;
    background: #f0f0f0;
}

.t-prev { width: 184px; }
.t-custom { width: 159px; margin-left: -1px; }

.tabs-top span { border-bottom: none; }
.tabs-low span { border-bottom: none; margin-left: -1px; }

.t-share { width: 142px; }
.t-sec { width: 110px; }

.tabs-low .t-general {
    width: 94px;
    height: 21px;
    margin-top: -2px;
    margin-left: 0;
    margin-right: 0;
    padding-right: 7px;
    padding-bottom: 2px;
    background: #fff;
    position: relative;
    z-index: 1;
}

.panel {
    height: 385px;
    padding: 19px 15px 0 14px;
    background: #fff;
    border: 1px solid #d9d9d9;
}

.name-row {
    display: flex;
    align-items: flex-start;
    height: 23px;
    margin-bottom: 11px;
}

.panel-ic {
    width: 18px;
    height: 28px;
    margin: -3px 51px 0 4px;
    flex: none;
}

.name-input {
    flex: 1;
    height: 23px;
    margin-right: -2px;
    line-height: 20px;
    padding-left: 2px;
    border: 1px solid #adadad;
    color: #6d6d6d;
}

.panel hr {
    height: 1px;
    margin: 0 0 6px;
    border: none;
    background: #a0a0a0;
}

.prop {
    display: flex;
    align-items: center;
    height: 26px;
}

.prop + hr {
    margin-top: 6px;
}

.prop > span:first-child {
    width: 73px;
    flex: none;
}

.two-line {
    line-height: 13px;
}

.attrs {
    display: flex;
}

.attrs-label {
    width: 73px;
    flex: none;
    height: 26px;
    line-height: 26px;
}

.attrs-main {
    flex: 1;
}

.check-row {
    display: flex;
    align-items: center;
    height: 26px;
}

.check-row + .check-row {
    height: 23px;
}

.check {
    width: 13px;
    height: 13px;
    margin-right: 3px;
    border: 1px solid #333;
    background: #fff;
    flex: none;
}

.check.mixed {
    box-shadow: inset 0 0 0 2px #fff, inset 0 0 0 9px #333;
}

.btn {
    display: flex;
    align-items: center;
    justify-content: center;
    width: 73px;
    height: 21px;
    background: #e1e1e1;
    border: 1px solid #adadad;
}

.btn-adv {
    width: 103px;
    margin-left: auto;
}

.btn-off {
    background: #ccc;
    border-color: #bfbfbf;
    color: #838383;
}

.btn-focus {
    border: 2px solid #0078d7;
}

.dlg-buttons {
    display: flex;
    justify-content: flex-end;
    gap: 8px;
    margin-top: 9px;
    margin-right: -1px;
}
```
